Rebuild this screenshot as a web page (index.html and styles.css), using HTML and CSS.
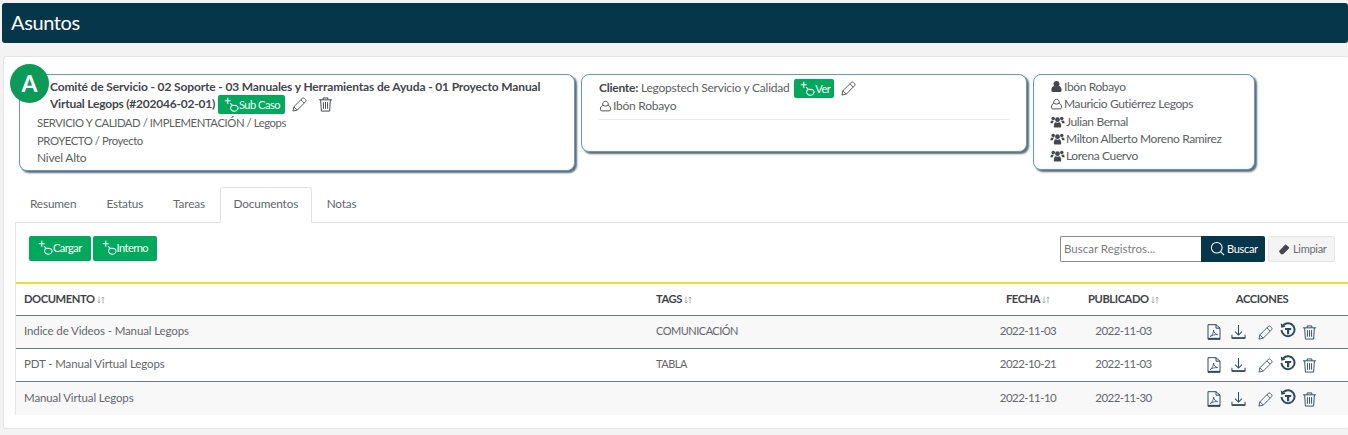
FILE: index.html
```html
<!DOCTYPE html>
<html lang="es">
<head>
<meta charset="utf-8">
<title>Asuntos</title>
<link rel="stylesheet" href="styles.css">
</head>
<body>
<svg class="defs" width="0" height="0" aria-hidden="true">
  <symbol id="i-hand" viewBox="0 0 16 16"><path d="M4 .8v6.400M.8 4h6.400" fill="none" stroke="currentColor" stroke-width="1.300"/><path d="M6.500 6.500l3 3" fill="none" stroke="currentColor" stroke-width="1.200"/><path d="M8 9.500a4 3.400 0 1 0 6.500.6C13 8.800 9.500 8.500 8 9.500z" fill="none" stroke="currentColor" stroke-width="1.100"/></symbol>
  <symbol id="i-pencil" viewBox="0 0 16 16"><path d="M1 15l1-4.600L11 1.500a1.500 1.500 0 0 1 2.100 0l1.400 1.400a1.500 1.500 0 0 1 0 2.100L5.600 14zM2 10.400L5.600 14M9.500 3l3.500 3.500" fill="none" stroke="currentColor" stroke-width=".9"/></symbol>
  <symbol id="i-trash" viewBox="0 0 16 16"><path d="M1 3h14M5.500 3V1h5v2M2.800 3l.8 12h8.800l.8-12M5.800 5.500v7M8 5.500v7M10.200 5.500v7" fill="none" stroke="currentColor" stroke-width="1"/></symbol>
  <symbol id="i-user" viewBox="0 0 14 14"><path d="M4.200 6.500a3 3 0 1 1 5.600 0M4.200 6.500C2.600 7.500 1.500 9 1.500 11.200c0 1 .6 1.600 1.500 1.600h8c.9 0 1.500-.6 1.500-1.600 0-2.200-1.100-3.700-2.700-4.700-.8 1.500-4.800 1.500-5.600 0z" fill="none" stroke="currentColor" stroke-width="1"/></symbol>
  <symbol id="i-user-f" viewBox="0 0 14 14"><circle cx="7" cy="4.300" r="3.200" fill="currentColor"/><path d="M1.500 11c0-3 1.700-4.500 3-4.500 1.500 1 3.500 1 5 0 1.300 0 3 1.500 3 4.500 0 1-.6 1.800-1.500 1.800H3c-.9 0-1.500-.8-1.500-1.800z" fill="currentColor"/></symbol>
  <symbol id="i-users" viewBox="0 0 16 14"><circle cx="8" cy="5" r="2.600" fill="currentColor"/><circle cx="3.400" cy="3.700" r="1.900" fill="currentColor"/><circle cx="12.600" cy="3.700" r="1.900" fill="currentColor"/><path d="M4 12.500c0-3 1-4.500 2-4.700 1.300.7 2.700.7 4 0 1 .2 2 1.700 2 4.700 0 .6-.4 1-1 1H5c-.6 0-1-.4-1-1zM.3 9c0-2 .7-3 1.700-3.200.7.5 1.500.6 2.200.4-.6.600-1 1.400-1.300 2.800zM15.700 9c0-2-.7-3-1.700-3.200-.7.5-1.500.6-2.200.4.600.6 1 1.400 1.300 2.800z" fill="currentColor"/></symbol>
  <symbol id="i-search" viewBox="0 0 16 16"><circle cx="7.200" cy="7.200" r="5.700" fill="none" stroke="currentColor" stroke-width="1.100"/><path d="M11.300 11.300L15 15" stroke="currentColor" stroke-width="1.100"/></symbol>
  <symbol id="i-eraser" viewBox="0 0 14 14"><path d="M1 9.500L8 2.200c.5-.5 1.200-.5 1.700 0l3 2.600c.5.500.5 1.200 0 1.700L6 13H3.500z" fill="currentColor"/></symbol>
  <symbol id="i-pdf" viewBox="0 0 14 16"><path d="M1 15.300V.7h8l4 3.500v11.100zM9 .7v3.500h4" fill="none" stroke="currentColor" stroke-width="1"/><path d="M3.200 12.500c2-1.200 3.300-3.600 3.400-6.500.4 2.600 1.600 4 4 4.600-2.900-.1-5.300.5-7.400 1.900z" fill="none" stroke="currentColor" stroke-width=".8"/><path d="M1 14.600h12" stroke="currentColor" stroke-width="1.500"/></symbol>
  <symbol id="i-down" viewBox="0 0 16 16"><path d="M8 .5v10.500M4.300 7.500L8 11.200l3.700-3.700M1 11v3.500h14V11" fill="none" stroke="currentColor" stroke-width="1.100"/><path d="M1 14.500h14" stroke="currentColor" stroke-width="1.700"/></symbol>
  <symbol id="i-restore" viewBox="0 0 16 16"><path d="M3.300 3.200A6.500 6.500 0 1 1 1.500 8" fill="none" stroke="currentColor" stroke-width="2"/><path d="M.8 1.200l.4 4.500 4.400-.9z" fill="currentColor"/><path d="M5 5.900h6.200v2H9.200v4.300H7V7.900H5z" fill="currentColor"/></symbol>
  <symbol id="i-sort" viewBox="0 0 8 8"><path d="M2 .5v6.500M.7 5.500L2 7l1.300-1.500M6 7.500V1M4.700 2.500L6 1l1.300 1.500" fill="none" stroke="currentColor" stroke-width=".8"/></symbol>
</svg>

<header class="page-title">Asuntos</header>

<main class="sheet">
  <div class="avatar">A</div>
  <section class="info-row">
    <article class="info info-case">
      <div class="case-title">
        <strong class="title-first">Comité de Servicio - 02 Soporte - 03 Manuales y Herramientas de Ayuda - 01 Proyecto Manual</strong>
        <div class="title-second">
          <strong>Virtual Legops (#202046-02-01)</strong>
          <a class="btn btn-green btn-inline"><svg class="ic-hand"><use href="#i-hand"/></svg>Sub Caso</a>
          <svg class="ic-edit"><use href="#i-pencil"/></svg>
          <svg class="ic-del"><use href="#i-trash"/></svg>
        </div>
      </div>
      <p class="caps">SERVICIO Y CALIDAD / IMPLEMENTACIÓN / Legops</p>
      <p class="caps">PROYECTO / Proyecto</p>
      <p>Nivel Alto</p>
    </article>
    <article class="info info-client">
      <div class="client-line">
        <strong>Cliente:</strong> Legopstech Servicio y Calidad
        <a class="btn btn-green btn-inline btn-ver"><svg class="ic-hand"><use href="#i-hand"/></svg>Ver</a>
        <svg class="ic-edit"><use href="#i-pencil"/></svg>
      </div>
      <div class="client-person"><svg class="ic-person"><use href="#i-user"/></svg>Ibón Robayo</div>
    </article>
    <article class="info info-people">
      <div class="person"><svg class="ic-person"><use href="#i-user-f"/></svg>Ibón Robayo</div>
      <div class="person"><svg class="ic-person"><use href="#i-user"/></svg>Mauricio Gutiérrez Legops</div>
      <div class="person"><svg class="ic-group"><use href="#i-users"/></svg>Julian Bernal</div>
      <div class="person"><svg class="ic-group"><use href="#i-users"/></svg>Milton Alberto Moreno Ramirez</div>
      <div class="person"><svg class="ic-group"><use href="#i-users"/></svg>Lorena Cuervo</div>
    </article>
  </section>

  <nav class="tabs">
    <a class="tab">Resumen</a>
    <a class="tab">Estatus</a>
    <a class="tab">Tareas</a>
    <a class="tab tab-active">Documentos</a>
    <a class="tab">Notas</a>
  </nav>

  <section class="panel">
    <div class="toolbar">
      <div class="toolbar-left">
        <a class="btn btn-green btn-tool"><svg class="ic-hand"><use href="#i-hand"/></svg>Cargar</a>
        <a class="btn btn-green btn-tool"><svg class="ic-hand"><use href="#i-hand"/></svg>Interno</a>
      </div>
      <div class="toolbar-right">
        <div class="search">
          <span class="search-input">Buscar Registros...</span>
          <a class="search-btn"><svg class="ic-search"><use href="#i-search"/></svg>Buscar</a>
        </div>
        <a class="clear-btn"><svg class="ic-eraser"><use href="#i-eraser"/></svg>Limpiar</a>
      </div>
    </div>
    <table class="docs">
      <colgroup><col class="c-doc"><col class="c-tags"><col class="c-date"><col class="c-pub"><col class="c-act"></colgroup>
      <thead>
        <tr>
          <th>DOCUMENTO <svg class="ic-sort"><use href="#i-sort"/></svg></th>
          <th>TAGS <svg class="ic-sort"><use href="#i-sort"/></svg></th>
          <th class="ctr">FECHA <svg class="ic-sort"><use href="#i-sort"/></svg></th>
          <th class="ctr">PUBLICADO <svg class="ic-sort"><use href="#i-sort"/></svg></th>
          <th class="ctr">ACCIONES</th>
        </tr>
      </thead>
      <tbody>
        <tr>
          <td>Indice de Videos - Manual Legops</td><td class="tag">COMUNICACIÓN</td><td class="ctr date">2022-11-03</td><td class="ctr date">2022-11-03</td>
          <td class="ctr"><span class="acts"><svg class="a-pdf"><use href="#i-pdf"/></svg><svg class="a-down"><use href="#i-down"/></svg><svg class="a-edit"><use href="#i-pencil"/></svg><svg class="a-rest"><use href="#i-restore"/></svg><svg class="a-del"><use href="#i-trash"/></svg></span></td>
        </tr>
        <tr>
          <td>PDT - Manual Virtual Legops</td><td class="tag">TABLA</td><td class="ctr date">2022-10-21</td><td class="ctr date">2022-11-03</td>
          <td class="ctr"><span class="acts"><svg class="a-pdf"><use href="#i-pdf"/></svg><svg class="a-down"><use href="#i-down"/></svg><svg class="a-edit"><use href="#i-pencil"/></svg><svg class="a-rest"><use href="#i-restore"/></svg><svg class="a-del"><use href="#i-trash"/></svg></span></td>
        </tr>
        <tr>
          <td>Manual Virtual Legops</td><td></td><td class="ctr date">2022-11-10</td><td class="ctr date">2022-11-30</td>
          <td class="ctr"><span class="acts"><svg class="a-pdf"><use href="#i-pdf"/></svg><svg class="a-down"><use href="#i-down"/></svg><svg class="a-edit"><use href="#i-pencil"/></svg><svg class="a-rest"><use href="#i-restore"/></svg><svg class="a-del"><use href="#i-trash"/></svg></span></td>
        </tr>
      </tbody>
    </table>
  </section>
</main>
</body>
</html>
```

FILE: styles.css
```css
* { box-sizing: border-box; }
html, body { margin: 0; height: 435px; overflow: hidden; }
body {
  background: #f3f3f3;
  color: #5c5f63;
  font: 12px/17px "Lato", "Liberation Sans", sans-serif;
  padding-top: 3px;
}
.defs { display: block; height: 0; }
svg { display: inline-block; flex: none; }

.page-title {
  margin-left: 2px;
  height: 40px;
  background: #06364a;
  border-radius: 3px;
  color: #fff;
  font-size: 20px;
  letter-spacing: -.4px;
  line-height: 39px;
  padding-left: 9px;
}

.sheet {
  position: relative;
  margin: 13px 0 0 3px;
  height: 373px;
  background: #fff;
  border: 1px solid #e4e4e4;
  border-right: 0;
  border-radius: 3px;
  padding: 17px 0 0 11px;
}
.avatar {
  position: absolute;
  left: 6px;
  top: 7px;
  width: 39px;
  height: 39px;
  border-radius: 50%;
  background: #0b9a57;
  color: #fff;
  font-size: 23px;
  font-weight: 700;
  line-height: 38px;
  text-align: center;
}

.info-row { display: flex; align-items: flex-start; gap: 6px; padding-left: 4px; }
.info {
  background: #fff;
  border: 1px solid #5b9ccc;
  border-radius: 8px;
  box-shadow: 2px 2px 2px #5e6b74;
  letter-spacing: -.24px;
}
.info p { margin: 0; line-height: 17.300px; }
.info .caps { font-size: 11.300px; letter-spacing: -.42px; }
.info-case { width: 556px; height: 97px; padding: 3px 17px 0; }
.case-title { padding-left: 13px; line-height: 17px; letter-spacing: -.14px; }
.title-first { display: block; white-space: nowrap; }
.title-second { white-space: nowrap; letter-spacing: -.22px; }
.case-title strong, .client-line strong { color: #43464a; }
.info-client { width: 446px; height: 78px; padding: 0 17px; position: relative; }
.client-line { margin-top: 4px; height: 18px; }
.client-person {
  border-bottom: 1px solid #e9e9e9;
  height: 23px;
}
.info-people { width: 222px; height: 96px; padding: 3px 16px 0; letter-spacing: -.38px; }
.person { height: 17.300px; white-space: nowrap; }

.btn {
  display: inline-flex;
  align-items: center;
  background: #00a95c;
  color: #fff;
  border-radius: 2px;
}
.btn-inline { height: 19px; font-size: 11px; letter-spacing: -.45px; padding: 0 5px 0 6px; vertical-align: middle; margin-left: 0; }
.btn-ver { padding-right: 4px; margin-left: 2px; }
.ic-hand { width: 15px; height: 15px; color: #fff; }
.ic-edit { width: 15px; height: 15px; color: #3a4044; margin: 0 0 0 4px; vertical-align: middle; }
.ic-del { width: 15px; height: 15px; color: #3a4044; margin-left: 8px; vertical-align: middle; }
.ic-person { width: 13px; height: 13px; margin-right: 1px; color: #44484c; vertical-align: -2px; }
.ic-group { width: 15px; height: 13px; margin-right: 1px; color: #44484c; vertical-align: -2px; }

.tabs { display: flex; margin-top: 16px; height: 36px; }
.tab { padding: 8px 15px 0; height: 36px; font-size: 11.800px; letter-spacing: -.15px; color: #63676b; }
.tab-active {
  background: #fff;
  border: 1px solid #e2e2e2;
  border-bottom: 1px solid #fff;
  border-radius: 3px 3px 0 0;
  padding: 7px 12.500px 0;
  position: relative;
  z-index: 1;
}

.panel { border-top: 1px solid #e2e2e2; border-left: 1px solid #e6e6e6; margin-top: -1px; height: 193px; }
.toolbar { display: flex; justify-content: space-between; padding: 13px 13px 0 13px; height: 59px; }
.toolbar-left { display: flex; gap: 2px; }
.btn-tool { height: 25px; font-size: 11px; letter-spacing: -.55px; padding: 0 9px 2px 9px; }
.toolbar-right { display: flex; gap: 3px; height: 26px; }
.search { display: flex; }
.search-input {
  width: 141px;
  height: 26px;
  border: 1px solid #8e8e8e;
  border-right: 0;
  border-radius: 2px 0 0 2px;
  padding-left: 3px;
  line-height: 23px;
  color: #7d7d7d;
  font-size: 11.500px;
}
.search-btn {
  display: flex;
  align-items: center;
  width: 64px;
  background: #06364a;
  color: #fff;
  font-size: 11px;
  letter-spacing: -.3px;
  border-radius: 0 2px 2px 0;
  padding: 0 0 1px 9px;
}
.ic-search { width: 15px; height: 15px; margin-right: 2px; }
.clear-btn {
  display: flex;
  align-items: center;
  width: 67px;
  background: #f4f4f4;
  border: 1px solid #e6e6e6;
  border-radius: 2px;
  color: #6a6e72;
  font-size: 11px;
  letter-spacing: -.3px;
  padding: 0 0 1px 9px;
}
.ic-eraser { width: 12px; height: 12px; margin-right: 3px; color: #44484c; }

.docs { width: 1332px; border-collapse: collapse; table-layout: fixed; border-top: 2px solid #dfe237; }
.c-doc { width: 632px; }
.c-tags { width: 337px; }
.c-date { width: 86px; }
.c-pub { width: 105px; }
.c-act { width: 172px; }
.docs th {
  height: 32px;
  padding: 0 8px 2px;
  font-size: 11.200px;
  font-weight: 700;
  letter-spacing: -.42px;
  color: #3f4347;
  text-align: left;
  border-bottom: 1px solid #6c7a84;
}
.docs td {
  height: 33px;
  padding: 0 8px 2px;
  border-bottom: 1px solid #6c7a84;
  color: #63666a;
  font-size: 11.500px;
  letter-spacing: -.12px;
}
.docs td.date { letter-spacing: -.55px; }
.docs td.tag { font-size: 11px; letter-spacing: -.5px; }
.docs tbody tr:nth-child(odd) td { background: #f8f8f8; }
.docs tbody tr:last-child td { border-bottom: 0; height: 34px; }
.docs .ctr { text-align: center; }
.ic-sort { width: 8px; height: 8px; color: #9aa0a5; vertical-align: -1px; }

.acts { display: inline-flex; align-items: center; height: 16px; color: #2e4a5a; vertical-align: middle; margin-top: 3px; }
.a-pdf { width: 14px; height: 16px; }
.a-down { width: 15px; height: 16px; margin-left: 10px; }
.a-edit { width: 15px; height: 15px; margin-left: 12px; }
.a-rest { width: 16px; height: 16px; margin-left: 7px; margin-top: -4px; }
.a-del { width: 15px; height: 15px; margin-left: 6px; }
```
